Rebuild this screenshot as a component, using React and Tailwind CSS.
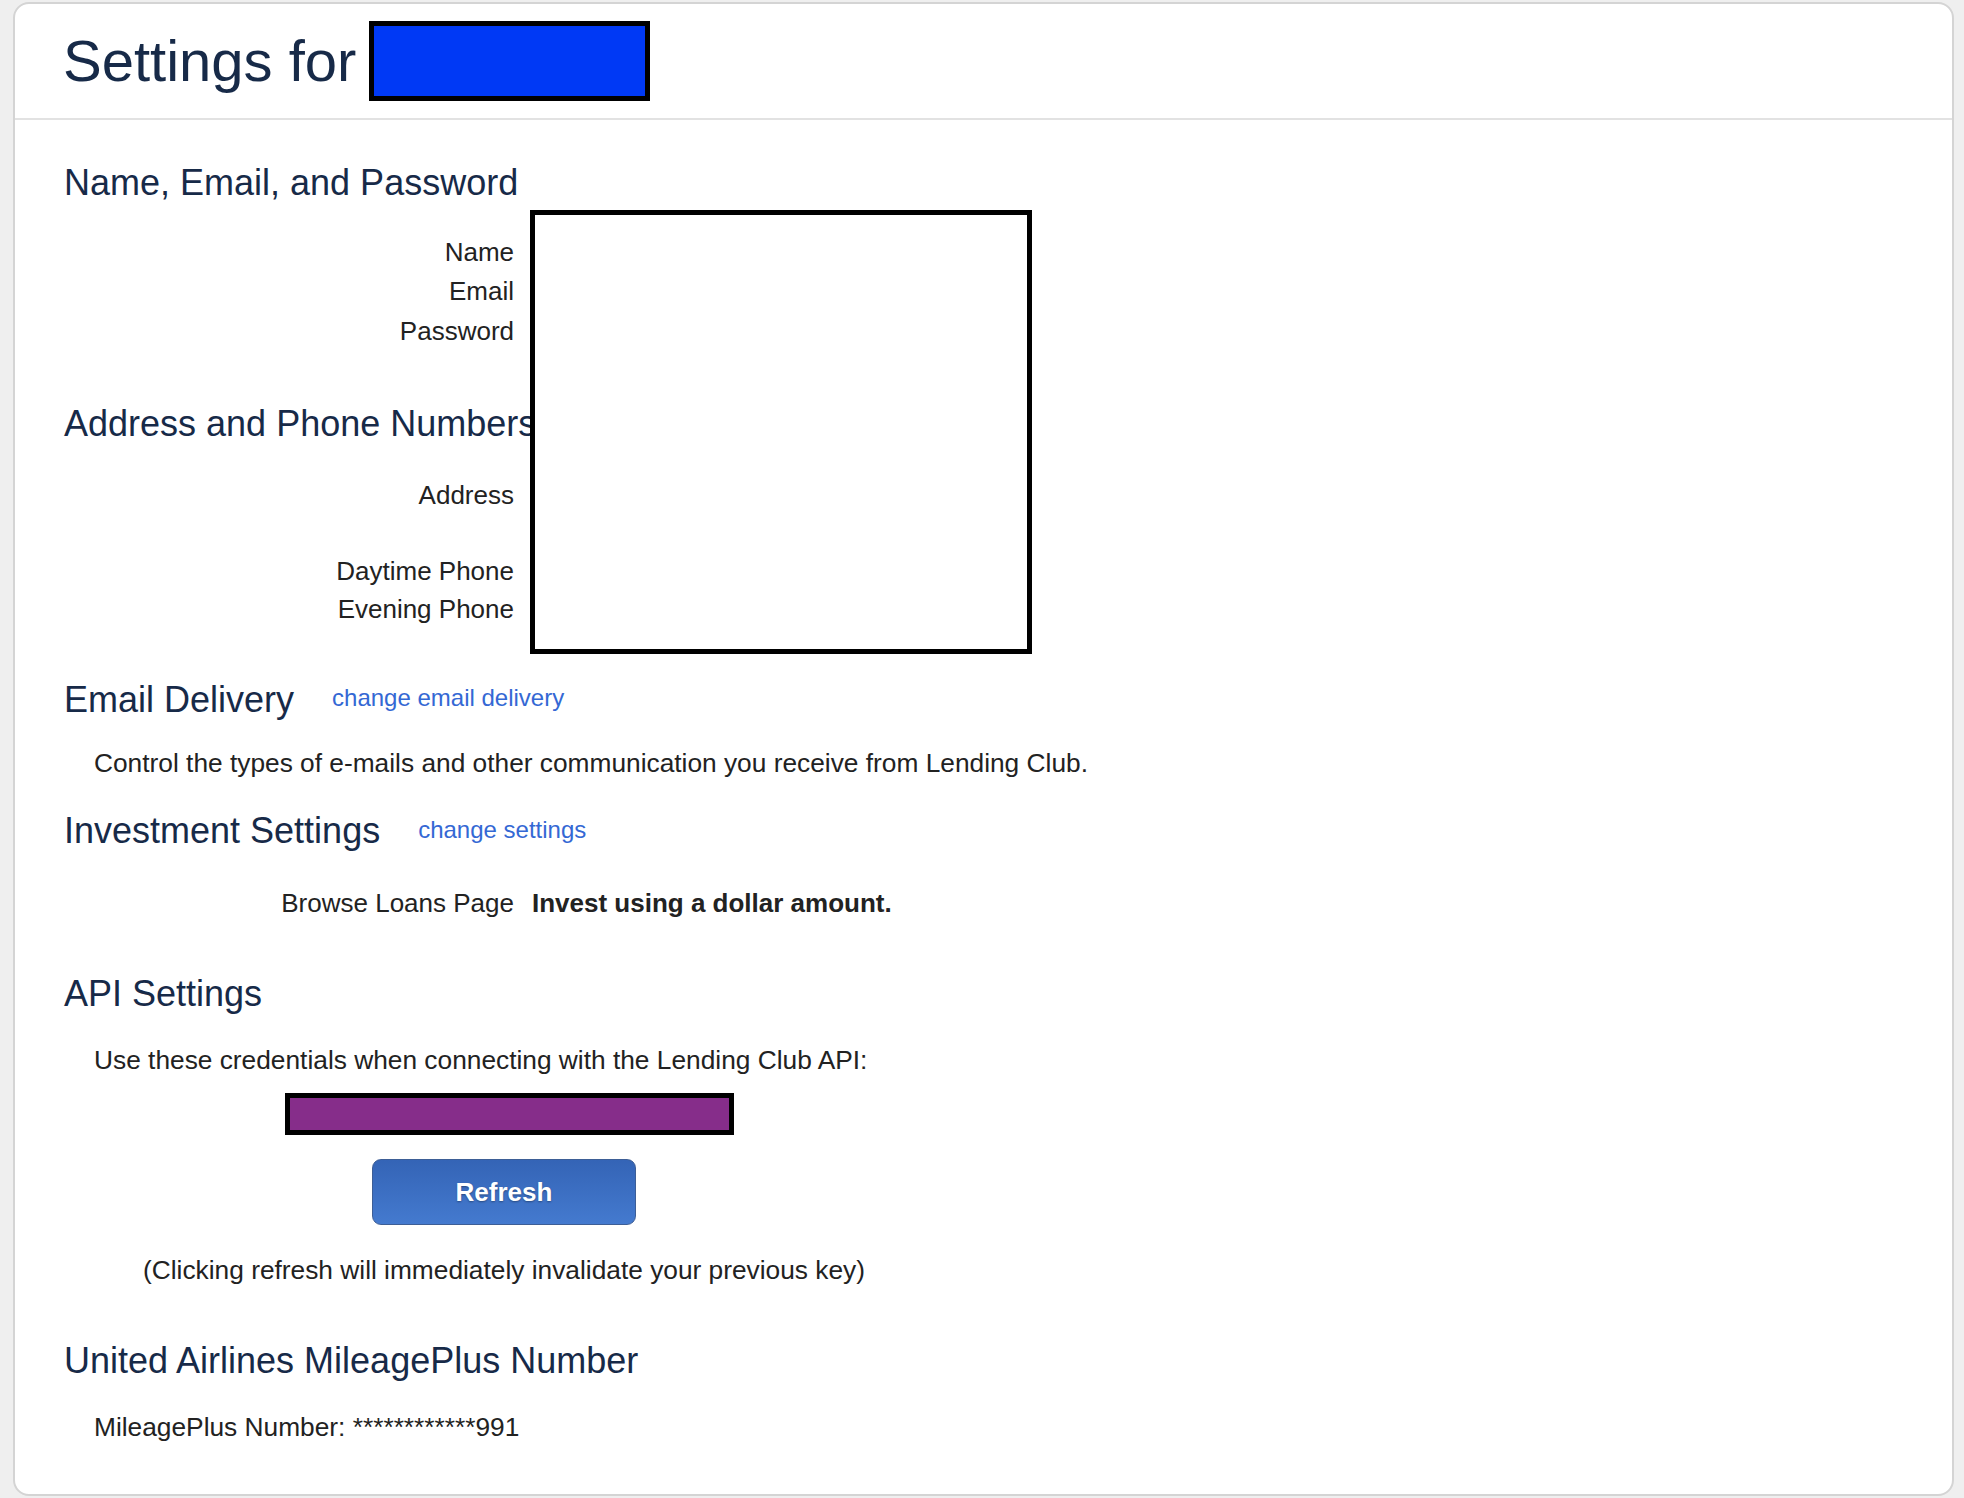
import React from "react";

function Heading({ children, className = "" }) {
  return (
    <h2 className={`text-[36px] leading-[40px] text-[#172a48] font-normal ${className}`}>
      {children}
    </h2>
  );
}

function LabelRow({ label, className = "" }) {
  return (
    <div className={`grid grid-cols-[450px_1fr] gap-x-[18px] ${className}`}>
      <div className="text-right text-[26px] leading-[40px] text-[#222]">{label}</div>
      <div />
    </div>
  );
}

export default function App() {
  return (
    <div className="min-h-[1498px] bg-[#efefef] pt-[2px] pl-[13px] pr-[10px] pb-[2px] font-['Liberation_Sans',Arial,sans-serif]">
      <div className="relative h-[1494px] rounded-[16px] border-2 border-[#d4d4d4] bg-white">
        {/* header */}
        <div className="flex h-[116px] items-center border-b-2 border-[#e2e2e2] pl-[48px]">
          <h1 className="text-[58px] leading-[64px] text-[#172a48] font-normal">Settings for</h1>
          <div className="ml-[13px] h-[80px] w-[281px] border-[5px] border-black bg-[#0039f5]" />
        </div>

        {/* body */}
        <div className="px-[49px]">
          <Heading className="mt-[43px]">Name, Email, and Password</Heading>
          <LabelRow label="Name" className="mt-[29px]" />
          <LabelRow label="Email" className="-mt-[1px]" />
          <LabelRow label="Password" />

          <Heading className="mt-[53px]">Address and Phone Numbers</Heading>
          <LabelRow label="Address" className="mt-[31px]" />
          <LabelRow label="Daytime Phone" className="mt-[36px]" />
          <LabelRow label="Evening Phone" className="-mt-[2px]" />

          <div className="mt-[51px] flex items-center">
            <Heading>Email Delivery</Heading>
            <a className="ml-[38px] -translate-y-[2px] text-[24px] leading-[40px] text-[#3468d4]">change email delivery</a>
          </div>
          <p className="ml-[30px] mt-[23px] text-[26.3px] leading-[40px] text-[#222]">
            Control the types of e-mails and other communication you receive from Lending Club.
          </p>

          <div className="mt-[28px] flex items-center">
            <Heading>Investment Settings</Heading>
            <a className="ml-[38px] -translate-y-[1px] text-[24px] leading-[40px] text-[#3468d4]">change settings</a>
          </div>
          <div className="mt-[32px] grid grid-cols-[450px_1fr] gap-x-[18px]">
            <div className="text-right text-[26px] leading-[40px] text-[#222]">Browse Loans Page</div>
            <div className="text-[26px] leading-[40px] font-bold text-[#222]">Invest using a dollar amount.</div>
          </div>

          <Heading className="mt-[51px]">API Settings</Heading>
          <p className="ml-[30px] mt-[26px] text-[26.3px] leading-[40px] text-[#222]">
            Use these credentials when connecting with the Lending Club API:
          </p>
          <div className="mt-[13px] w-[880px]">
            <div className="ml-[221px] h-[42px] w-[449px] border-[5px] border-black bg-[#862d8a]" />
            <div className="mt-[24px] flex justify-center">
              <button className="h-[66px] w-[264px] rounded-[9px] border border-[#3d5e96] bg-linear-to-b from-[#3464b6] to-[#447acf] text-[26px] font-bold text-white [text-shadow:0_1px_2px_rgba(0,0,0,0.35)]">
                Refresh
              </button>
            </div>
            <p className="mt-[25px] text-center text-[26.3px] leading-[40px] text-[#222]">
              (Clicking refresh will immediately invalidate your previous key)
            </p>
          </div>

          <Heading className="mt-[51px]">United Airlines MileagePlus Number</Heading>
          <p className="ml-[30px] mt-[26px] text-[26.3px] leading-[40px] text-[#222]">
            MileagePlus Number: ************991
          </p>
        </div>

        {/* redaction overlay */}
        <div className="absolute left-[515px] top-[206px] h-[444px] w-[502px] border-[5px] border-black bg-white" />
      </div>
    </div>
  );
}
